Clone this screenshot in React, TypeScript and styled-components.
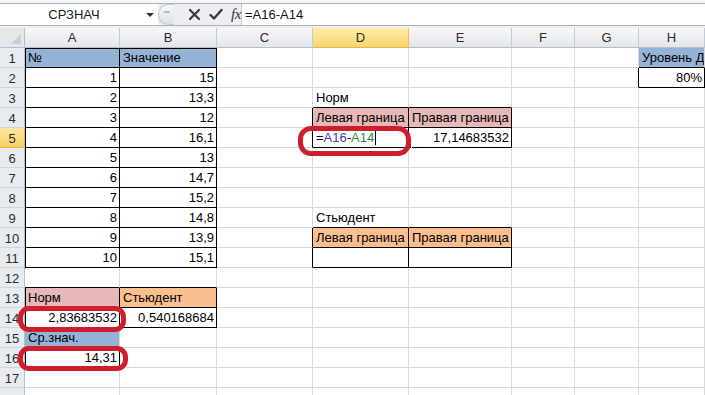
import React from "react";
import styled, { createGlobalStyle } from "styled-components";

const GlobalStyle = createGlobalStyle`
  html, body { margin: 0; padding: 0; background: #ffffff; overflow: hidden; }
  body { font-family: "Liberation Sans", Arial, sans-serif; }
  #root { width: 705px; height: 395px; }
`;

type Col = { id: string; w: number };
const COLS: Col[] = [
  { id: "A", w: 95 },
  { id: "B", w: 97 },
  { id: "C", w: 96 },
  { id: "D", w: 96 },
  { id: "E", w: 103 },
  { id: "F", w: 63 },
  { id: "G", w: 64 },
  { id: "H", w: 66 },
];
const ROWS = 18;
const LABELLED_ROWS = 17;

const BLUE = "#95b3d7";
const PINK = "#e6b8b7";
const ORANGE = "#fabf8f";
const GRID = "#d9d9d9";

type CellSpec = {
  v?: React.ReactNode;
  align?: "left" | "right";
  fill?: string;
  box?: boolean;
};

const cells: Record<string, CellSpec> = {
  A1: { v: "№", fill: BLUE, box: true },
  B1: { v: "Значение", fill: BLUE, box: true },
  H1: { v: "Уровень Д", fill: BLUE },
  H2: { v: "80%", align: "right", box: true },
  D3: { v: "Норм" },
  D4: { v: "Левая граница", fill: PINK, box: true },
  E4: { v: "Правая граница", fill: PINK, box: true },
  E5: { v: "17,14683532", align: "right", box: true },
  D9: { v: "Стьюдент" },
  D10: { v: "Левая граница", fill: ORANGE, box: true },
  E10: { v: "Правая граница", fill: ORANGE, box: true },
  D11: { box: true },
  E11: { box: true },
  A13: { v: "Норм", fill: PINK, box: true },
  B13: { v: "Стьюдент", fill: ORANGE, box: true },
  A14: { v: "2,83683532", align: "right", box: true },
  B14: { v: "0,540168684", align: "right", box: true },
  A15: { v: "Ср.знач.", fill: BLUE },
  A16: { v: "14,31", align: "right", box: true },
};

const values = ["15", "13,3", "12", "16,1", "13", "14,7", "15,2", "14,8", "13,9", "15,1"];
values.forEach((val, i) => {
  cells[`A${i + 2}`] = { v: String(i + 1), align: "right", box: true };
  cells[`B${i + 2}`] = { v: val, align: "right", box: true };
});

const Page = styled.div`
  position: relative;
  width: 705px;
  height: 395px;
  overflow: hidden;
  background: #ffffff;
  display: flex;
  flex-direction: column;
`;

const FormulaBar = styled.div`
  height: 26px;
  padding-top: 3px;
  box-sizing: border-box;
  background: #f4f6f9;
  flex: none;
`;

const BarInner = styled.div`
  height: 23px;
  box-sizing: border-box;
  border-top: 1px solid #a9b4c2;
  border-bottom: 1px solid #a9b4c2;
  display: flex;
  align-items: stretch;
  background: #ffffff;
`;

const NameBox = styled.div`
  width: 158px;
  display: flex;
  align-items: center;
  background: #ffffff;
`;

const NameText = styled.span`
  flex: 1;
  text-align: center;
  font-size: 13px;
  color: #1b1b1b;
  padding-left: 2px;
`;

const DropArrow = styled.span`
  width: 0;
  height: 0;
  border-left: 4px solid transparent;
  border-right: 4px solid transparent;
  border-top: 4px solid #333;
  margin-right: 4px;
  margin-top: 1px;
`;

const Controls = styled.div`
  width: 84px;
  display: flex;
  align-items: center;
  gap: 8px;
  background: #eceef1;
  border-right: 1px solid #c6ccd4;
  box-sizing: border-box;
`;

const Grip = styled.div`
  width: 16px;
  height: 21px;
  border-radius: 10px 0 0 10px;
  background: linear-gradient(#f7f8fa, #dde1e6);
  border: 1px solid #c3c9d1;
  border-right: none;
  box-sizing: border-box;
  display: flex;
  align-items: center;
  justify-content: center;
  margin-right: 6px;
`;

const GripDash = styled.span`
  width: 6px;
  height: 2px;
  background: #b8bec6;
  margin-top: -6px;
`;

const FxText = styled.span`
  font-family: "Liberation Serif", "Times New Roman", serif;
  font-style: italic;
  font-size: 15px;
  color: #333;
  letter-spacing: -0.5px;
`;

const FormulaInput = styled.div`
  flex: 1;
  display: flex;
  align-items: center;
  padding-left: 3px;
  font-size: 13px;
  color: #111;
  background: #ffffff;
`;

const Strip = styled.div`
  height: 2px;
  background: #eef0f3;
  flex: none;
`;

const Sheet = styled.div<{ $template: string }>`
  display: grid;
  grid-template-columns: 25px ${(p) => p.$template};
  grid-auto-rows: 20px;
  flex: none;
`;

const Corner = styled.div`
  position: relative;
  background: #e4e8ed;
  border-right: 1px solid #b4bfcc;
  border-bottom: 1px solid #b4bfcc;
  box-sizing: border-box;
  &::after {
    content: "";
    position: absolute;
    right: 3px;
    bottom: 3px;
    border-left: 10px solid transparent;
    border-bottom: 10px solid #c9ced5;
  }
`;

const ColHead = styled.div<{ $sel?: boolean }>`
  box-sizing: border-box;
  display: flex;
  align-items: center;
  justify-content: center;
  font-size: 13px;
  color: #2b2b2b;
  background: ${(p) =>
    p.$sel ? "linear-gradient(#fdecaa, #f8d56c)" : "linear-gradient(#f6f7f9, #e3e6ea)"};
  border-right: 1px solid ${(p) => (p.$sel ? "#e8c15a" : "#c3cad3")};
  border-bottom: 1px solid ${(p) => (p.$sel ? "#e2b748" : "#b4bfcc")};
`;

const RowHead = styled.div<{ $sel?: boolean }>`
  box-sizing: border-box;
  display: flex;
  align-items: center;
  justify-content: center;
  padding-top: 1px;
  font-size: 13px;
  color: #2b2b2b;
  background: ${(p) => (p.$sel ? "linear-gradient(#fde7a0, #f7d067)" : "#e8ebef")};
  border-right: 1px solid ${(p) => (p.$sel ? "#e2b748" : "#b4bfcc")};
  border-bottom: 1px solid ${(p) => (p.$sel ? "#e2b748" : "#cfd5dc")};
`;

const Cell = styled.div<{
  $fill?: string;
  $align?: "left" | "right";
  $br: boolean;
  $bb: boolean;
  $bl: boolean;
  $bt: boolean;
}>`
  position: relative;
  box-sizing: border-box;
  background: ${(p) => p.$fill || "#ffffff"};
  border-right: 1px solid ${(p) => (p.$br ? "#000" : GRID)};
  border-bottom: 1px solid ${(p) => (p.$bb ? "#000" : GRID)};
  box-shadow: ${(p) => {
    const s: string[] = [];
    if (p.$bl) s.push("inset 1px 0 0 #000");
    if (p.$bt) s.push("inset 0 1px 0 #000");
    return s.length ? s.join(", ") : "none";
  }};
  font-size: 13px;
  color: #000;
  line-height: 20px;
  padding: 0 2px 0 3px;
  white-space: nowrap;
  overflow: ${(p) => (p.$fill || p.$align === "right" ? "hidden" : "visible")};
  text-align: ${(p) => p.$align || "left"};
  z-index: ${(p) => (p.$fill || p.$align === "right" ? 1 : 2)};
`;

const Ref = styled.span<{ $c: string }>`
  color: ${(p) => p.$c};
`;

const Caret = styled.span`
  display: inline-block;
  width: 1px;
  height: 15px;
  background: #000;
  vertical-align: -3px;
  margin-left: 1px;
`;

const FillHandle = styled.span`
  position: absolute;
  right: -4px;
  bottom: -3px;
  width: 5px;
  height: 5px;
  background: #000;
  border: 1px solid #fff;
  z-index: 5;
`;

const Ring = styled.div<{ $x: number; $y: number; $w: number; $h: number; $r: number }>`
  position: absolute;
  left: ${(p) => p.$x}px;
  top: ${(p) => p.$y}px;
  width: ${(p) => p.$w}px;
  height: ${(p) => p.$h}px;
  border: 5px solid #cf1e2b;
  border-radius: ${(p) => p.$r}px;
  box-sizing: border-box;
  pointer-events: none;
  z-index: 10;
`;

const Icon = styled.svg`
  display: block;
  flex: none;
`;

function boxed(colIdx: number, row: number): boolean {
  if (colIdx < 0 || colIdx >= COLS.length || row < 1) return false;
  return !!cells[`${COLS[colIdx].id}${row}`]?.box;
}

export default function App() {
  const template = COLS.map((c) => `${c.w}px`).join(" ");
  const grid: React.ReactNode[] = [];

  grid.push(<Corner key="corner" />);
  COLS.forEach((c) => grid.push(<ColHead key={`h${c.id}`} $sel={c.id === "D"}>{c.id}</ColHead>));

  for (let r = 1; r <= ROWS; r++) {
    grid.push(
      <RowHead key={`r${r}`} $sel={r === 5}>
        {r <= LABELLED_ROWS ? r : ""}
      </RowHead>
    );
    COLS.forEach((c, ci) => {
      const key = `${c.id}${r}`;
      const spec = cells[key] || {};
      const isBox = boxed(ci, r) || key === "D5";
      const br = isBox || boxed(ci + 1, r) || key === "C5";
      const bb = isBox || boxed(ci, r + 1) || key === "D4";
      const bl = ci === 0 && isBox;
      const bt = r === 1 && isBox;
      let content: React.ReactNode = spec.v;
      if (key === "D5") {
        content = (
          <>
            =<Ref $c="#3a3ab8">A16</Ref>-<Ref $c="#2f8a3c">A14</Ref>
            <Caret />
            <FillHandle />
          </>
        );
      }
      grid.push(
        <Cell
          key={key}
          $fill={spec.fill}
          $align={spec.align}
          $br={br}
          $bb={bb}
          $bl={bl}
          $bt={bt}
        >
          {content}
        </Cell>
      );
    });
  }

  return (
    <Page>
      <GlobalStyle />
      <FormulaBar>
        <BarInner>
          <NameBox>
            <NameText>СРЗНАЧ</NameText>
            <DropArrow />
          </NameBox>
          <Controls>
            <Grip>
              <GripDash />
            </Grip>
            <Icon width="13" height="13" viewBox="0 0 13 13">
              <path d="M2 2 L11 11 M11 2 L2 11" stroke="#3a3a3a" strokeWidth="2.2" strokeLinecap="round" />
            </Icon>
            <Icon width="14" height="13" viewBox="0 0 14 13">
              <path d="M1.5 7 L5 10.5 L12.5 2" stroke="#3a3a3a" strokeWidth="2.4" fill="none" strokeLinecap="round" strokeLinejoin="round" />
            </Icon>
            <FxText>fx</FxText>
          </Controls>
          <FormulaInput>=A16-A14</FormulaInput>
        </BarInner>
      </FormulaBar>
      <Strip />
      <Sheet $template={template}>{grid}</Sheet>
      <Ring $x={18} $y={306} $w={108} $h={26} $r={11} />
      <Ring $x={18} $y={346} $w={110} $h={25} $r={11} />
      <Ring $x={298} $y={126} $w={113} $h={30} $r={13} />
    </Page>
  );
}
